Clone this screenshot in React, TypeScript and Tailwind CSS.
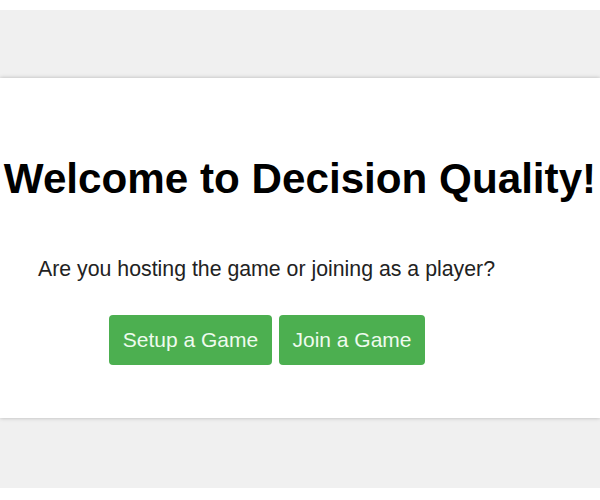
import React from 'react';

export default function App() {
  return (
    <div className="h-[500px] w-[600px] overflow-hidden bg-white pt-[10px] font-['Liberation_Sans',Arial,sans-serif]">
      <div className="flex flex-col bg-[#f0f0f0] pt-[68px] pb-[70px]">
        <div className="h-[340px] bg-white shadow-[0_0_4px_rgba(0,0,0,0.25)]">
          <h1 className="pt-[77px] text-center text-[42.2px] leading-[48px] font-bold whitespace-nowrap text-black">
            Welcome to Decision Quality!
          </h1>
          <p className="mt-[54px] pl-[38px] text-[21.3px] leading-[24px] text-[#222]">
            Are you hosting the game or joining as a player?
          </p>
          <div className="mt-[34px] flex gap-[7px] pl-[109px]">
            <button className="h-[50px] w-[163px] rounded-[4px] bg-[#4caf50] text-[21px] text-[#eefbee]">
              Setup a Game
            </button>
            <button className="h-[50px] w-[146px] rounded-[4px] bg-[#4caf50] text-[21px] text-[#eefbee]">
              Join a Game
            </button>
          </div>
        </div>
      </div>
    </div>
  );
}
